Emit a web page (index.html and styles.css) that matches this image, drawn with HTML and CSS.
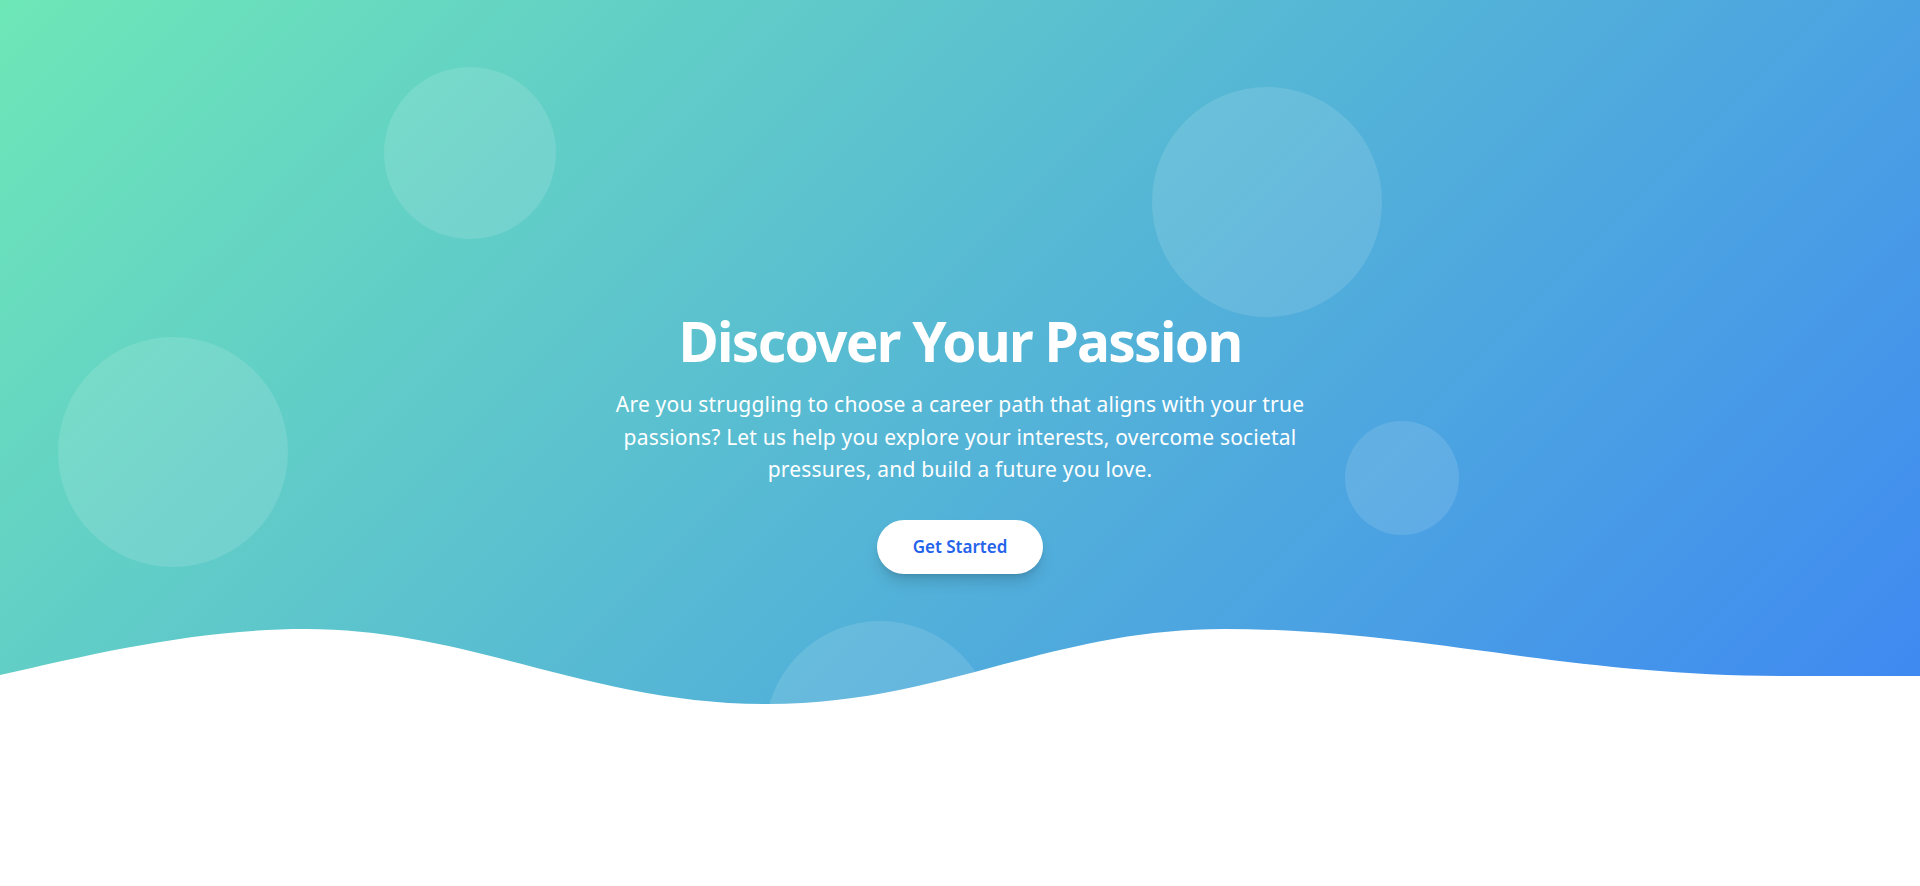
FILE: index.html
```html
<!DOCTYPE html>
<html lang="en">
<head>
<meta charset="utf-8">
<title>Discover Your Passion</title>
<link rel="stylesheet" href="styles.css">
</head>
<body>
<section class="hero">
  <div class="bubble bubble-a"></div>
  <div class="bubble bubble-b"></div>
  <div class="bubble bubble-c"></div>
  <div class="bubble bubble-d"></div>
  <div class="bubble bubble-e"></div>
  <div class="content">
    <h1 class="title">Discover Your Passion</h1>
    <p class="lead">Are you struggling to choose a career path that aligns with your true passions? Let us help you explore your interests, overcome societal pressures, and build a future you love.</p>
    <a class="cta" href="#">Get Started</a>
  </div>
  <svg class="wave" viewBox="0 0 1920 286" preserveAspectRatio="none" aria-hidden="true">
    <path d="M0,75 C100,52 200,29 306,29 C470,29 590,104 768,104 C940,104 1050,29 1224,29 C1420,29 1560,76 1790,76 L1920,76 L1920,286 L0,286 Z" fill="#ffffff"/>
  </svg>
</section>
</body>
</html>
```

FILE: styles.css
```css
* { box-sizing: border-box; }
html, body { margin: 0; padding: 0; }
body {
  font-family: "Noto Sans", "Open Sans", Arial, sans-serif;
  background: #ffffff;
}
.hero {
  position: relative;
  height: 886px;
  overflow: hidden;
  background: linear-gradient(135deg, #6ee7b7, #3b82f6);
  display: flex;
  align-items: center;
  justify-content: center;
}
.bubble {
  position: absolute;
  border-radius: 50%;
  background: rgba(255, 255, 255, 0.12);
}
.bubble-a { left: 384px; top: 67px; width: 172px; height: 172px; }
.bubble-b { left: 58px; top: 337px; width: 230px; height: 230px; }
.bubble-c { left: 1152px; top: 87px; width: 230px; height: 230px; }
.bubble-d { left: 1345px; top: 421px; width: 114px; height: 114px; }
.bubble-e { left: 765px; top: 621px; width: 230px; height: 230px; }
.content {
  position: relative;
  z-index: 2;
  display: flex;
  flex-direction: column;
  align-items: center;
  text-align: center;
  color: #ffffff;
  margin-top: -2px;
}
.title {
  margin: 0 0 17px;
  font-size: 55px;
  line-height: 1.1;
  font-weight: 700;
  letter-spacing: -1.7px;
}
.lead {
  margin: 0 0 34px;
  max-width: 700px;
  font-size: 21px;
  line-height: 32.5px;
  letter-spacing: 0.2px;
}
.cta {
  display: inline-block;
  padding: 15px 36px;
  border-radius: 9999px;
  background: #ffffff;
  color: #2563eb;
  font-size: 17px;
  line-height: 24px;
  font-weight: 600;
  text-decoration: none;
  box-shadow: 0 10px 15px -3px rgba(0, 0, 0, 0.15), 0 4px 6px -4px rgba(0, 0, 0, 0.15);
}
.wave {
  position: absolute;
  left: 0;
  bottom: 0;
  width: 100%;
  height: 286px;
  z-index: 1;
  display: block;
}
```
